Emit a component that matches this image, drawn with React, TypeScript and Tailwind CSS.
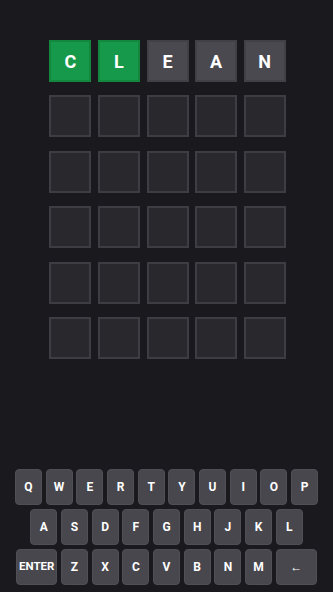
import React from "react";

const rows: { letter: string; state: "correct" | "absent" | "empty" }[][] = [
  [
    { letter: "C", state: "correct" },
    { letter: "L", state: "correct" },
    { letter: "E", state: "absent" },
    { letter: "A", state: "absent" },
    { letter: "N", state: "absent" },
  ],
  ...Array.from({ length: 5 }, () =>
    Array.from({ length: 5 }, () => ({ letter: "", state: "empty" as const }))
  ),
];

const kb = [
  ["Q", "W", "E", "R", "T", "Y", "U", "I", "O", "P"],
  ["A", "S", "D", "F", "G", "H", "J", "K", "L"],
  ["ENTER", "Z", "X", "C", "V", "B", "N", "M", "←"],
];

function Tile({ letter, state }: { letter: string; state: string }) {
  const cls =
    state === "correct"
      ? "bg-[#16994b] border-[#14873f]"
      : state === "absent"
      ? "bg-[#4a4950] border-[#414046]"
      : "bg-[#29282d] border-[#3e3d43]";
  return (
    <div
      className={`w-[42px] h-[42px] border-2 flex items-center justify-center text-white font-bold text-[18px] ${cls}`}
    >
      {letter}
    </div>
  );
}

export default function App() {
  return (
    <div
      className="w-[333px] h-[592px] bg-[#1a191e] flex flex-col items-center"
      style={{ fontFamily: "Roboto, 'Liberation Sans', sans-serif" }}
    >
      <div className="mt-[40px] ml-[2px] flex flex-col gap-[13.4px]">
        {rows.map((r, i) => (
          <div key={i} className="flex gap-[6.6px]">
            {r.map((t, j) => (
              <Tile key={j} letter={t.letter} state={t.state} />
            ))}
          </div>
        ))}
      </div>
      <div className="mt-auto mb-[7px] flex flex-col items-center gap-[4px]">
        {kb.map((r, i) => (
          <div key={i} className="flex gap-[3.7px]">
            {r.map((k) => (
              <div
                key={k}
                className={`${
                  k.length > 1 || k === "←" ? "w-[41px]" : "w-[27px]"
                } h-[36px] rounded-[4px] bg-[#48474d] border border-[#504f56] flex items-center justify-center text-white font-bold ${
                  k === "ENTER" ? "text-[11.5px]" : "text-[12px]"
                }`}
              >
                {k}
              </div>
            ))}
          </div>
        ))}
      </div>
    </div>
  );
}
